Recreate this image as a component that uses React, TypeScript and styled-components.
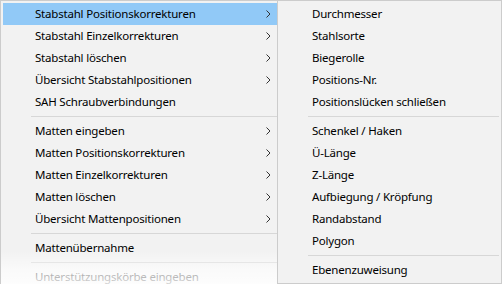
import React from "react";
import styled, { createGlobalStyle } from "styled-components";

const Global = createGlobalStyle`
  html, body { margin: 0; padding: 0; background: #ffffff; overflow: hidden; }
  body { width: 503px; height: 284px; font-family: "Noto Sans", "Liberation Sans", sans-serif; }
`;

const Page = styled.div`
  position: relative;
  display: flex;
  align-items: flex-start;
  width: 503px;
  height: 284px;
  overflow: hidden;
`;

const Menu = styled.div<{ $width: number; $main?: boolean }>`
  position: relative;
  box-sizing: border-box;
  width: ${(p) => p.$width}px;
  flex: none;
  display: flex;
  flex-direction: column;
  background: #f2f2f2;
  border: 1px solid #cccccc;
  ${(p) => (p.$main ? "border-right: none; border-bottom: none;" : "")}
  padding: 2px;
  ${(p) => (p.$main ? "padding-right: 0;" : "")}
`;

const Item = styled.div<{ $active?: boolean; $disabled?: boolean }>`
  display: flex;
  align-items: center;
  height: 22px;
  padding-left: 32px;
  padding-right: 6px;
  background: ${(p) => (p.$active ? "#91c9f7" : "transparent")};
  color: ${(p) => (p.$disabled ? "#6d6d6d" : "#000000")};
  font-size: 11.5px;
  letter-spacing: -0.2px;
  white-space: nowrap;
`;

const Label = styled.span`
  flex: 1;
  line-height: 22px;
`;

const Separator = styled.div`
  height: 7px;
  margin-left: 28px;
  display: flex;
  align-items: center;
  &::after {
    content: "";
    display: block;
    width: 100%;
    height: 1px;
    background: #d7d7d7;
  }
`;

const Fade = styled.div`
  position: absolute;
  left: 0;
  right: 0;
  top: 250px;
  height: 40px;
  pointer-events: none;
  background: linear-gradient(
    to bottom,
    rgba(255, 255, 255, 0) 0%,
    rgba(255, 255, 255, 0.6) 45%,
    rgba(255, 255, 255, 0.95) 100%
  );
`;

const Chevron = () => (
  <svg width="5" height="8" viewBox="0 0 5 8" style={{ display: "block" }}>
    <path d="M0.5 0.5 L4 4 L0.5 7.5" fill="none" stroke="#333333" strokeWidth="1" />
  </svg>
);

type Entry = { label?: string; sub?: boolean; active?: boolean; disabled?: boolean; sep?: boolean };

const mainItems: Entry[] = [
  { label: "Stabstahl Positionskorrekturen", sub: true, active: true },
  { label: "Stabstahl Einzelkorrekturen", sub: true },
  { label: "Stabstahl löschen", sub: true },
  { label: "Übersicht Stabstahlpositionen", sub: true },
  { label: "SAH Schraubverbindungen" },
  { sep: true },
  { label: "Matten eingeben", sub: true },
  { label: "Matten Positionskorrekturen", sub: true },
  { label: "Matten Einzelkorrekturen", sub: true },
  { label: "Matten löschen", sub: true },
  { label: "Übersicht Mattenpositionen", sub: true },
  { sep: true },
  { label: "Mattenübernahme" },
  { sep: true },
  { label: "Unterstützungskörbe eingeben" },
];

const subItems: Entry[] = [
  { label: "Durchmesser" },
  { label: "Stahlsorte" },
  { label: "Biegerolle" },
  { label: "Positions-Nr." },
  { label: "Positionslücken schließen" },
  { sep: true },
  { label: "Schenkel / Haken" },
  { label: "Ü-Länge" },
  { label: "Z-Länge" },
  { label: "Aufbiegung / Kröpfung" },
  { label: "Randabstand" },
  { label: "Polygon" },
  { sep: true },
  { label: "Ebenenzuweisung" },
];

const renderEntries = (items: Entry[]) =>
  items.map((e, i) =>
    e.sep ? (
      <Separator key={i} />
    ) : (
      <Item key={i} $active={e.active} $disabled={e.disabled}>
        <Label>{e.label}</Label>
        {e.sub && <Chevron />}
      </Item>
    )
  );

export default function App() {
  return (
    <>
      <Global />
      <Page>
        <Menu $width={277} $main>
          {renderEntries(mainItems)}
          <Fade />
        </Menu>
        <Menu $width={225}>{renderEntries(subItems)}</Menu>
      </Page>
    </>
  );
}
